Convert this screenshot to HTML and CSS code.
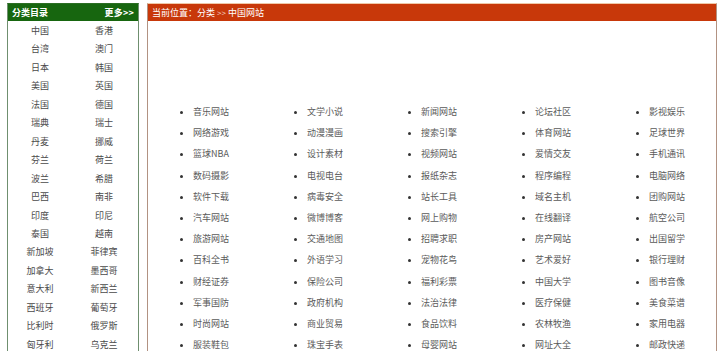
FILE: index.html
```html
<!DOCTYPE html>
<html lang="zh-CN">
<head>
<meta charset="utf-8">
<title>中国网站</title>
<link rel="stylesheet" href="styles.css">
</head>
<body>
<div class="page">
  <aside class="side">
    <div class="side-head"><span class="side-title">分类目录</span><span class="more">更多&gt;&gt;</span></div>
    <ul class="side-list">
      <li>中国</li><li>香港</li>
      <li>台湾</li><li>澳门</li>
      <li>日本</li><li>韩国</li>
      <li>美国</li><li>英国</li>
      <li>法国</li><li>德国</li>
      <li>瑞典</li><li>瑞士</li>
      <li>丹麦</li><li>挪威</li>
      <li>芬兰</li><li>荷兰</li>
      <li>波兰</li><li>希腊</li>
      <li>巴西</li><li>南非</li>
      <li>印度</li><li>印尼</li>
      <li>泰国</li><li>越南</li>
      <li>新加坡</li><li>菲律宾</li>
      <li>加拿大</li><li>墨西哥</li>
      <li>意大利</li><li>新西兰</li>
      <li>西班牙</li><li>葡萄牙</li>
      <li>比利时</li><li>俄罗斯</li>
      <li>匈牙利</li><li>乌克兰</li>
    </ul>
  </aside>
  <main class="main">
    <div class="main-head">当前位置：分类 <span class="sep">&gt;&gt;</span> 中国网站</div>
    <ul class="cat-list">
      <li>音乐网站</li><li>文学小说</li><li>新闻网站</li><li>论坛社区</li><li>影视娱乐</li>
      <li>网络游戏</li><li>动漫漫画</li><li>搜索引擎</li><li>体育网站</li><li>足球世界</li>
      <li>篮球NBA</li><li>设计素材</li><li>视频网站</li><li>爱情交友</li><li>手机通讯</li>
      <li>数码摄影</li><li>电视电台</li><li>报纸杂志</li><li>程序编程</li><li>电脑网络</li>
      <li>软件下载</li><li>病毒安全</li><li>站长工具</li><li>域名主机</li><li>团购网站</li>
      <li>汽车网站</li><li>微博博客</li><li>网上购物</li><li>在线翻译</li><li>航空公司</li>
      <li>旅游网站</li><li>交通地图</li><li>招聘求职</li><li>房产网站</li><li>出国留学</li>
      <li>百科全书</li><li>外语学习</li><li>宠物花鸟</li><li>艺术爱好</li><li>银行理财</li>
      <li>财经证券</li><li>保险公司</li><li>福利彩票</li><li>中国大学</li><li>图书音像</li>
      <li>军事国防</li><li>政府机构</li><li>法治法律</li><li>医疗保健</li><li>美食菜谱</li>
      <li>时尚网站</li><li>商业贸易</li><li>食品饮料</li><li>农林牧渔</li><li>家用电器</li>
      <li>服装鞋包</li><li>珠宝手表</li><li>母婴网站</li><li>网址大全</li><li>邮政快递</li>
    </ul>
  </main>
</div>
</body>
</html>
```

FILE: styles.css
```css
html, body {
  margin: 0;
  padding: 0;
  background: #ffffff;
  overflow: hidden;
}

body {
  font-family: "Noto Sans CJK SC", "Noto Sans", "Liberation Sans", sans-serif;
  font-size: 9px;
  color: #4a4a4a;
}

.page {
  display: flex;
  align-items: flex-start;
  gap: 8px;
  padding: 3px 3px 0 7px;
  height: 348px;
  overflow: hidden;
}

.side {
  width: 130px;
  flex: none;
  border: 1px solid #6f8f6f;
  border-top-color: #2c6e24;
}

.side-head {
  display: flex;
  justify-content: space-between;
  align-items: center;
  height: 17px;
  padding: 0 4px 0 4px;
  background: #17660f;
  color: #ffffff;
  font-weight: bold;
  line-height: 17px;
}

.more {
  letter-spacing: 0.2px;
}

.side-list {
  list-style: none;
  margin: 0;
  padding: 1px 0 0 0;
  display: grid;
  grid-template-columns: 64px 64px;
  line-height: 18.45px;
  text-align: center;
  color: #4a4a4a;
}

.main {
  flex: 1;
  min-width: 0;
  height: 360px;
  overflow: hidden;
  border: 1px solid #b29282;
  border-top-color: #f0c8a8;
  border-bottom: none;
}

.main-head {
  height: 17px;
  line-height: 17px;
  padding-left: 4px;
  background: #c8380a;
  color: #ffffff;
}

.sep {
  font-size: 8px;
  color: #f3d2c4;
}

.cat-list {
  list-style: disc outside;
  margin: 80px 0 0 0;
  padding: 0 0 0 45px;
  display: grid;
  grid-template-columns: repeat(5, 104px);
  column-gap: 10px;
  line-height: 21.2px;
  color: #5a5a5a;
}

.cat-list li::marker {
  color: #333333;
}
```
